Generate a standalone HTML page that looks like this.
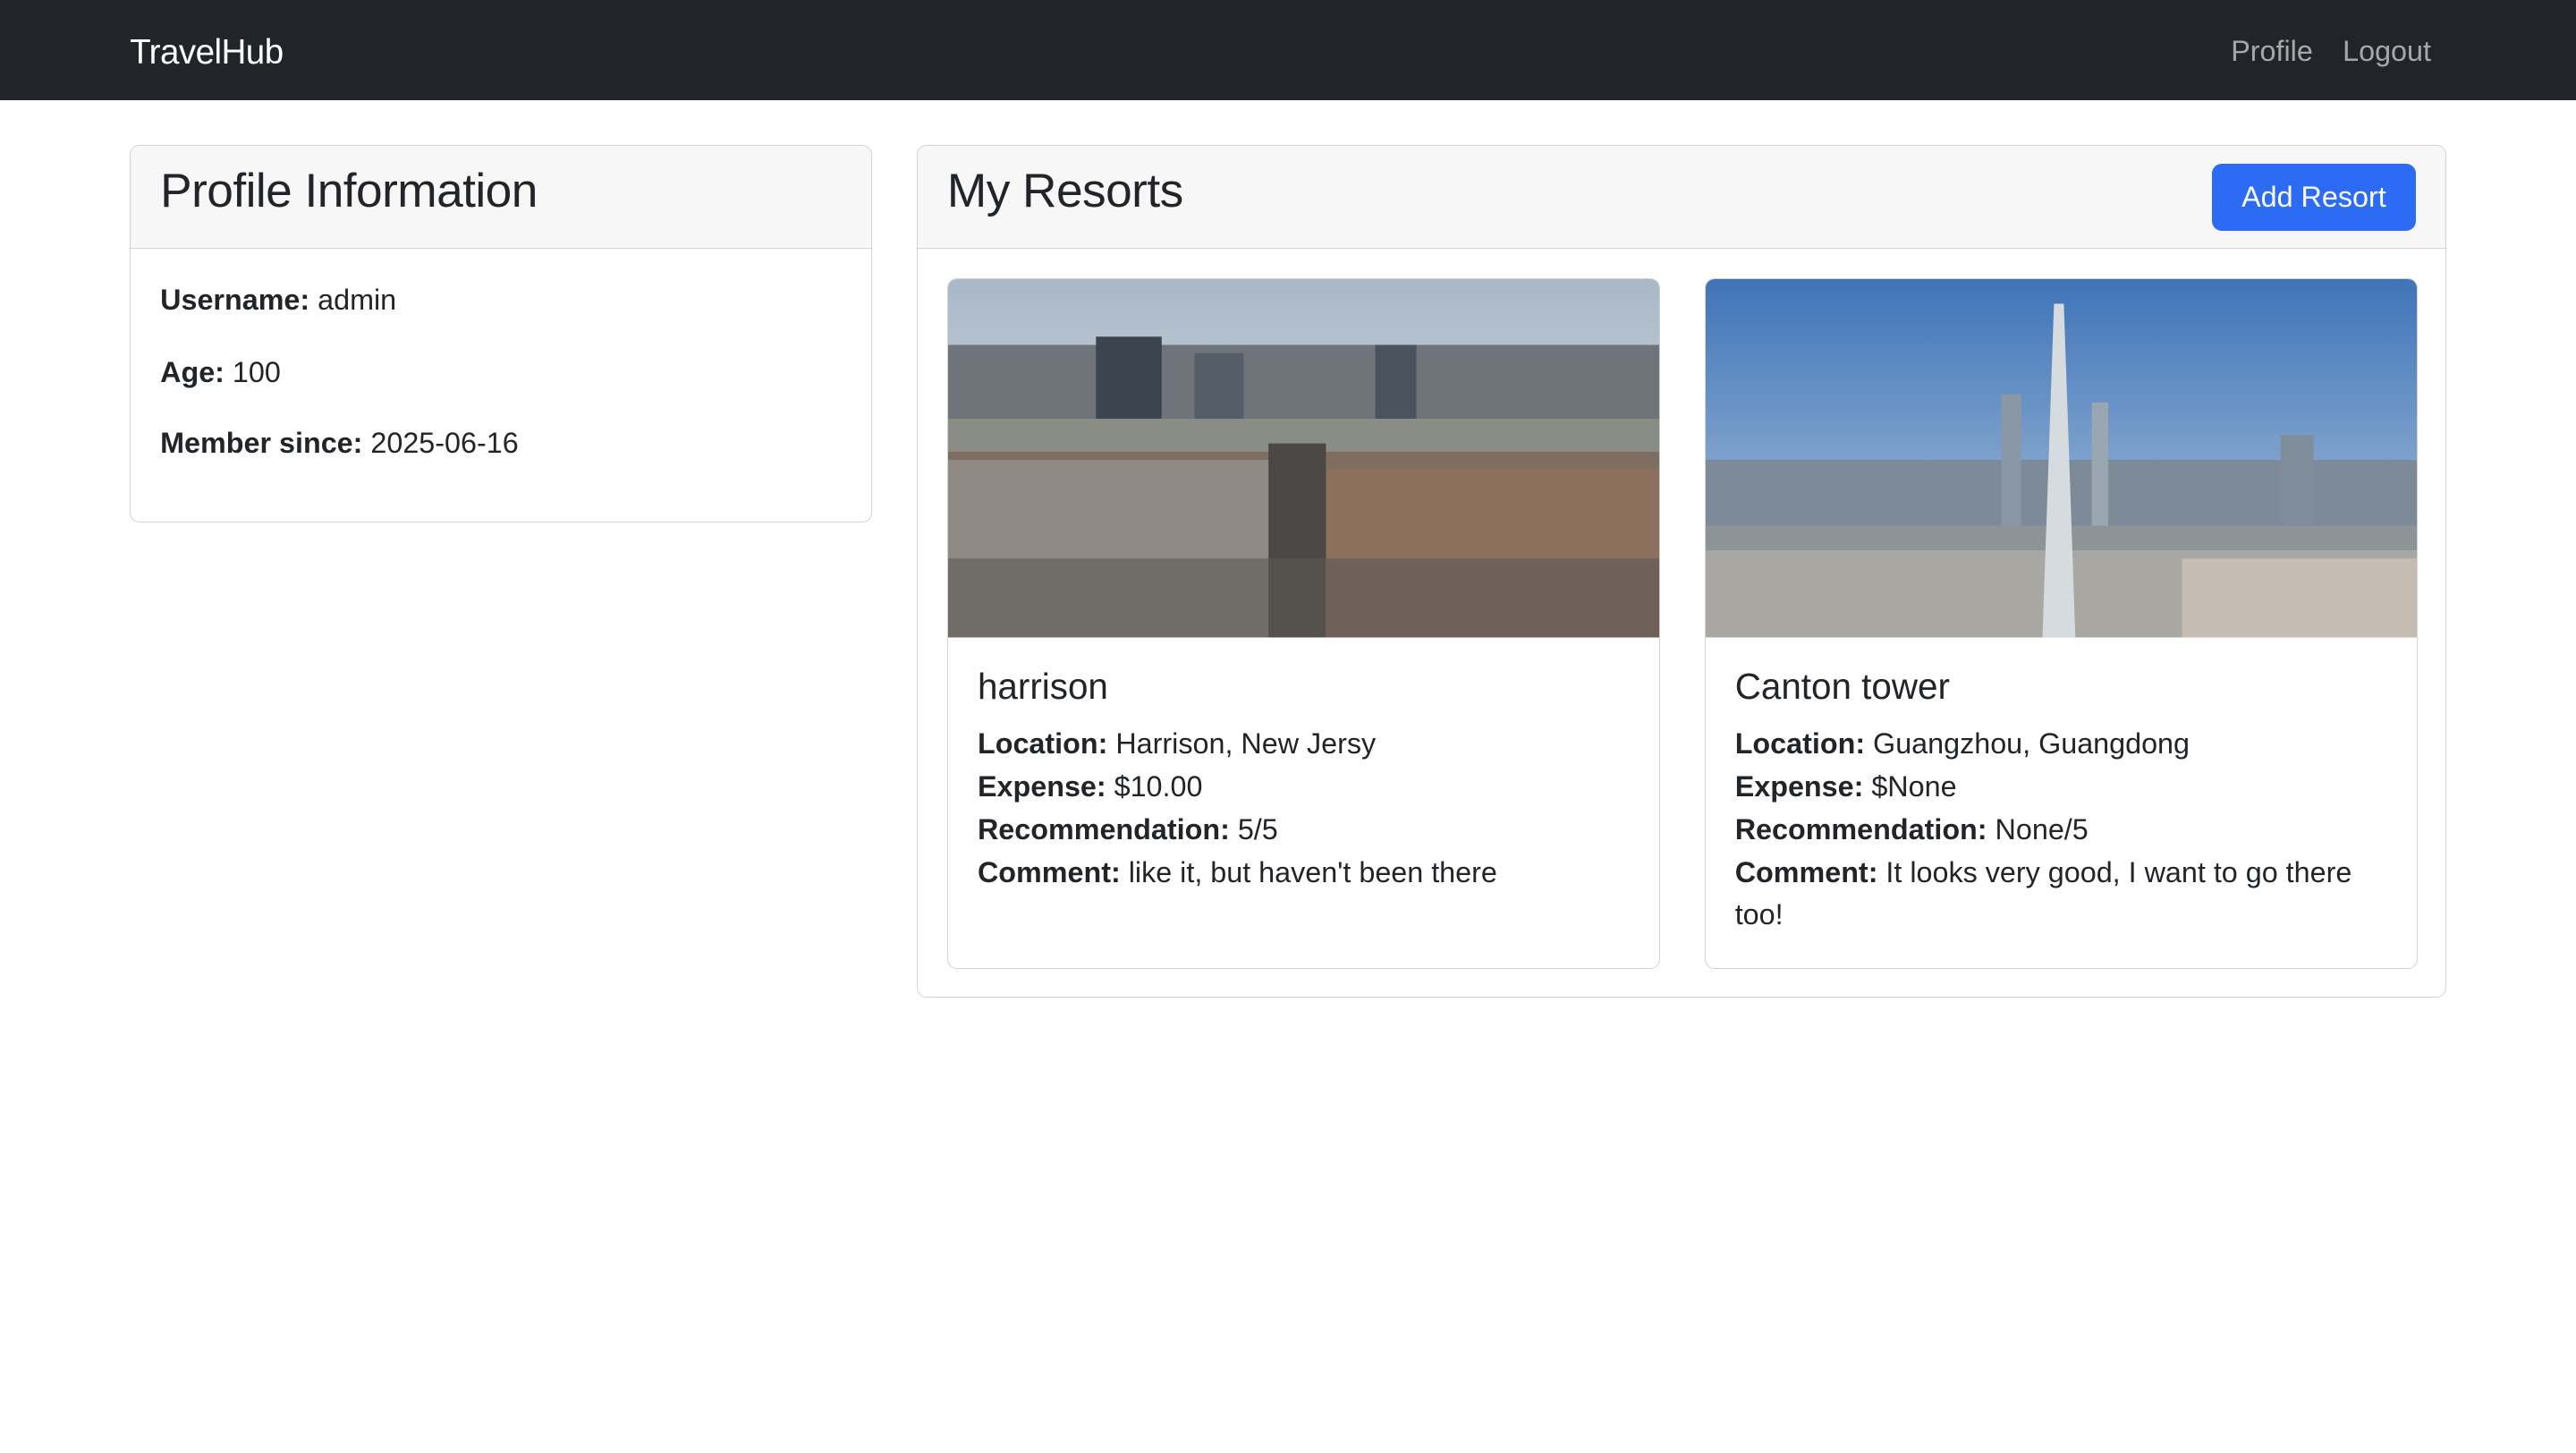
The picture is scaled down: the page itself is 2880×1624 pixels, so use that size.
<!DOCTYPE html>
<html><head><meta charset="utf-8"><style>
html,body{margin:0;padding:0;background:#fff}
body{width:1568px;height:884px;zoom:1.8367;font-family:"Liberation Sans",Helvetica,Arial,sans-serif;color:#212529;font-size:17.6px;overflow:hidden;position:relative}
.nav{position:absolute;left:0;top:0;width:1568px;height:61px;background:#212529}
.brand{position:absolute;left:79px;top:20px;color:#fff;font-size:21px;letter-spacing:-0.3px}
.nl{position:absolute;top:21px;color:rgba(255,255,255,.6);font-size:17.6px}
.card{position:absolute;border:1px solid #d2d2d2;border-radius:6px;box-sizing:border-box;background:#fff;overflow:hidden}
.hdr{height:63px;background:#f7f7f7;border-bottom:1px solid #d2d2d2;box-sizing:border-box;position:relative}
.hdr h2{margin:0;position:absolute;left:18px;top:11px;font-weight:500;font-size:29px;letter-spacing:-0.3px}
.p{position:absolute;left:18px;margin:0}
b{font-weight:700}
.btn{position:absolute;right:18px;top:11px;width:124px;height:41px;background:#2c6cf5;border-radius:6px;color:#fff;font-size:17.6px;text-align:center;line-height:41px}
.rc{position:absolute;border:1px solid #d2d2d2;border-radius:6px;box-sizing:border-box;overflow:hidden;background:#fff}
.rc svg{display:block}
.rb{padding:16px 18px;line-height:26px}
.rb h5{margin:0 0 8px;font-size:22px;font-weight:500;line-height:28px}
</style></head><body>
<div class="nav"><div class="brand">TravelHub</div><div class="nl" style="left:1358px">Profile</div><div class="nl" style="left:1426px">Logout</div></div>

<div class="card" style="left:79px;top:88px;width:452px;height:230px">
<div class="hdr"><h2>Profile Information</h2></div>
<p class="p" style="top:84px">
<b>Username:</b> admin</p>
<p class="p" style="top:128px"><b>Age:</b> 100</p>
<p class="p" style="top:171px"><b>Member since:</b> 2025-06-16</p>
</div>

<div class="card" style="left:558px;top:88px;width:931px;height:519px">
<div class="hdr"><h2>My Resorts</h2><div class="btn">Add Resort</div></div>

<div class="rc" style="left:18px;top:81px;width:434px;height:420px">
<svg width="434" height="218" viewBox="0 0 434 218">
<defs><linearGradient id="s1" x1="0" y1="0" x2="0" y2="1"><stop offset="0" stop-color="#a9b8c8"/><stop offset="1" stop-color="#e4e6e8"/></linearGradient></defs>
<rect width="434" height="218" fill="url(#s1)"/>
<rect x="0" y="40" width="434" height="55" fill="#6f747a"/>
<rect x="90" y="35" width="40" height="50" fill="#3c4450"/><rect x="150" y="45" width="30" height="40" fill="#555d68"/><rect x="260" y="40" width="25" height="45" fill="#4a525c"/>
<rect x="0" y="85" width="434" height="25" fill="#8a8d86"/>
<rect x="0" y="105" width="434" height="113" fill="#7e6e62"/>
<rect x="0" y="110" width="200" height="108" fill="#8f8a84"/>
<rect x="230" y="115" width="204" height="103" fill="#8c6f5c"/>
<rect x="195" y="100" width="35" height="118" fill="#4a4744"/>
<rect x="0" y="170" width="434" height="48" fill="#5c5853" opacity=".6"/>
</svg>
<div class="rb"><h5>harrison</h5>
<div><b>Location:</b> Harrison, New Jersy</div>
<div><b>Expense:</b> $10.00</div>
<div><b>Recommendation:</b> 5/5</div>
<div><b>Comment:</b> like it, but haven't been there</div></div>
</div>

<div class="rc" style="left:479px;top:81px;width:434px;height:420px">
<svg width="434" height="218" viewBox="0 0 434 218">
<defs><linearGradient id="s2" x1="0" y1="0" x2="0" y2="1"><stop offset="0" stop-color="#3f74b8"/><stop offset="1" stop-color="#b9cde0"/></linearGradient></defs>
<rect width="434" height="218" fill="url(#s2)"/>
<rect x="0" y="110" width="434" height="50" fill="#7d8a98"/>
<rect x="180" y="70" width="12" height="80" fill="#8a97a5"/><rect x="235" y="75" width="10" height="80" fill="#9aa6b2"/><rect x="350" y="95" width="20" height="60" fill="#7f8c99"/>
<rect x="0" y="150" width="434" height="25" fill="#8c9498"/>
<rect x="0" y="165" width="434" height="53" fill="#a9a7a2"/>
<polygon points="212,15 218,15 225,218 205,218" fill="#d6dbe0"/>
<rect x="290" y="170" width="144" height="48" fill="#c5bdb2"/>
</svg>
<div class="rb"><h5>Canton tower</h5>
<div><b>Location:</b> Guangzhou, Guangdong</div>
<div><b>Expense:</b> $None</div>
<div><b>Recommendation:</b> None/5</div>
<div><b>Comment:</b> It looks very good, I want to go there too!</div></div>
</div>
</div>
</body></html>
